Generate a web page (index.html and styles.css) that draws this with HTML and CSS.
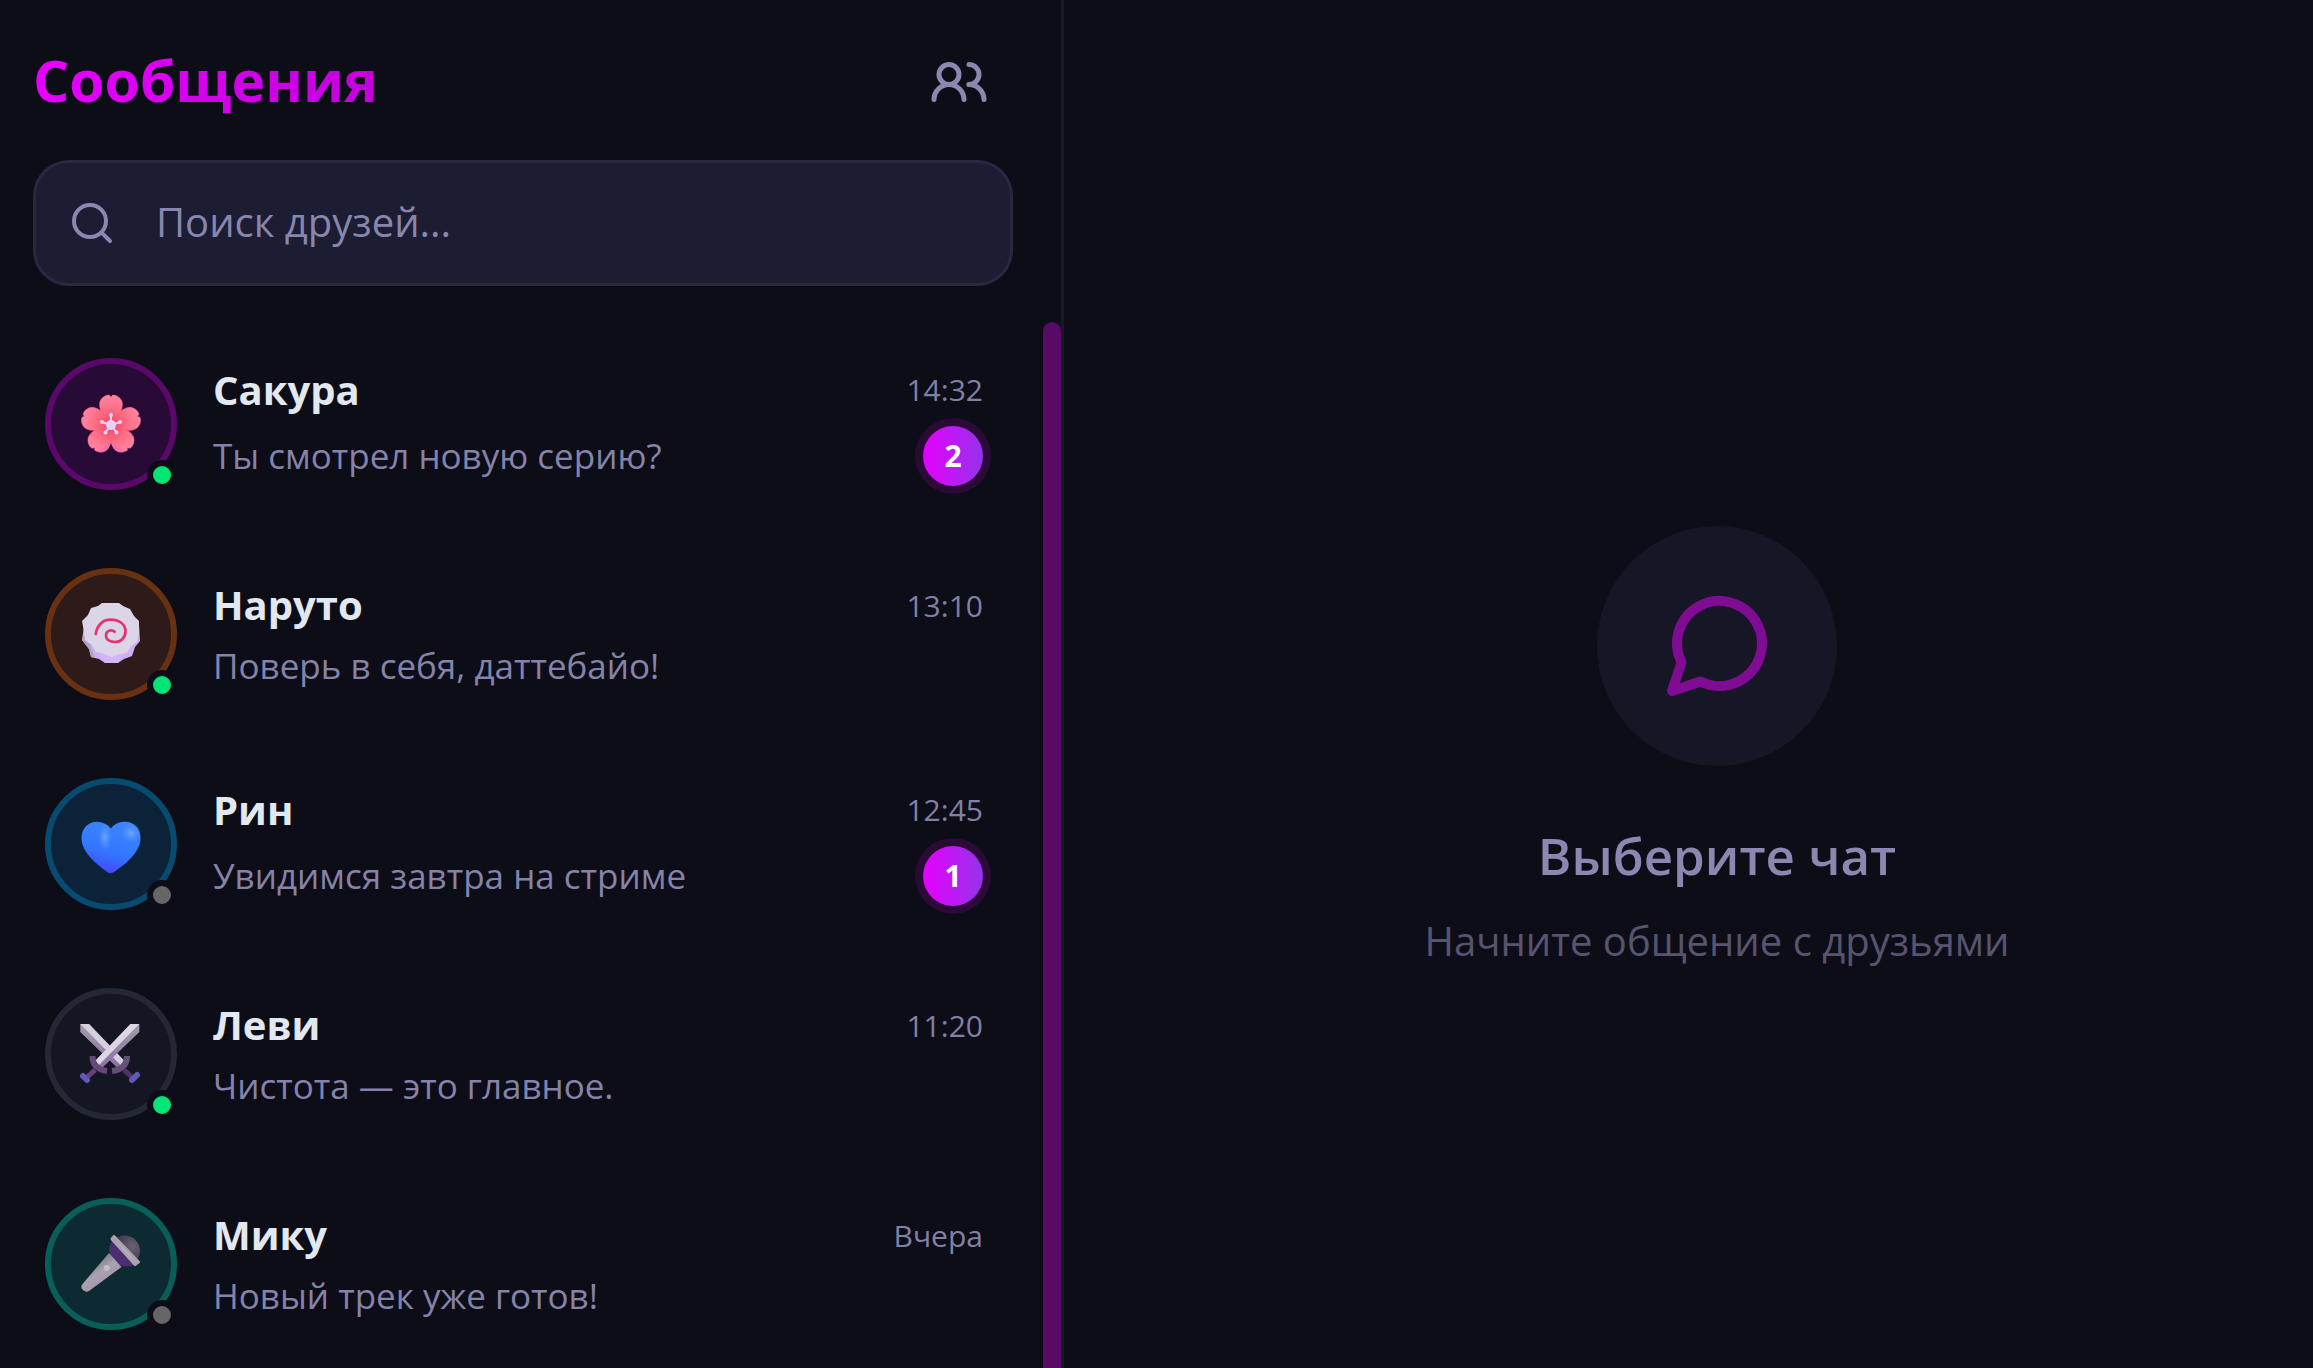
FILE: index.html
```html
<!DOCTYPE html>
<html lang="ru">
<head>
  <meta charset="UTF-8">
  <meta name="viewport" content="width=device-width, initial-scale=1.0">
  <title>Сообщения</title>
  <link rel="stylesheet" href="styles.css">
</head>
<body>
  <div class="app">
    <aside class="sidebar">
      <header class="header">
        <h1 class="title">Сообщения</h1>
        <button class="icon-btn" type="button" aria-label="Друзья">
          <svg viewBox="0 0 24 24"><circle cx="8" cy="9" r="4"/><path d="M2 19a6 6 0 0 1 12 0"/><path d="M16 5a4 4 0 0 1 0 8"/><path d="M16 13a6 6 0 0 1 6 6"/></svg>
        </button>
      </header>

      <label class="search">
        <svg viewBox="0 0 24 24"><circle cx="11" cy="11" r="8"/><path d="M21 21l-4.3-4.3"/></svg>
        <input type="text" placeholder="Поиск друзей..." aria-label="Поиск друзей">
      </label>

      <div class="list-wrap">
        <ul class="chat-list">
          <li>
            <a class="chat" href="#">
              <span class="avatar pink">
                <svg viewBox="0 0 60 60">
                  <defs>
                    <radialGradient id="petal" gradientUnits="userSpaceOnUse" cx="30" cy="30" r="30">
                      <stop offset="0" stop-color="#f5455f"/><stop offset=".55" stop-color="#ff6f88"/><stop offset="1" stop-color="#ff86a6"/>
                    </radialGradient>
                    <path id="p" d="M30 32C24 25 18 18 18.500 9.500C19 5 23 1.500 27 1L28.500 1L30 3L31.500 1L33 1C37 1.500 41 5 41.500 9.500C42 18 36 25 30 32Z"/>
                  </defs>
                  <g fill="url(#petal)" stroke="#f25f7c" stroke-width=".4">
                    <use href="#p" transform="rotate(144 30 31)"/>
                    <use href="#p" transform="rotate(216 30 31)"/>
                    <use href="#p" transform="rotate(72 30 31)"/>
                    <use href="#p" transform="rotate(288 30 31)"/>
                    <use href="#p"/>
                  </g>
                  <path d="M16 57c5 3 10 2 13-6l1-8 1 8c3 8 8 9 13 6-5-1-9-4-14-10-5 6-9 9-14 10z" fill="#f35fc0" opacity=".4"/>
                  <g stroke="#ead2ff" stroke-width="2" fill="#ead2ff">
                    <path d="M30 31V21M30 31l9.500-3M30 31l6 8M30 31l-6 8M30 31l-9.500-3"/>
                    <circle cx="30" cy="21" r="1"/><circle cx="39" cy="28" r="1"/><circle cx="35.500" cy="38.500" r="1"/><circle cx="24.500" cy="38.500" r="1"/><circle cx="21" cy="28" r="1"/>
                    <circle cx="30" cy="31" r="4"/>
                  </g>
                </svg>
                <i class="status online"></i>
              </span>
              <span class="info">
                <span class="row"><b class="name">Сакура</b><time class="time">14:32</time></span>
                <span class="row"><span class="preview">Ты смотрел новую серию?</span><span class="badge">2</span></span>
              </span>
            </a>
          </li>
          <li>
            <a class="chat" href="#">
              <span class="avatar orange">
                <svg viewBox="0 0 60 60">
                  <path d="M3 22L1 36L8 45L10 53L18 55L24 59H37L43 55L51 52L54 43L59 37L58 20Z" fill="#cfaef5"/>
                  <path d="M1 36L8 45L10 53L14 54L8 38L3 31Z" fill="#b3a3bd"/>
                  <path d="M18 50L24 59H37L43 50Z" fill="#d6b4fa"/>
                  <path d="M21 -1H38L42 2L49 5L53 12L58 17V29L56 38L50 42L46 49L38 50L31 53L23 50L15 48L11 41L4 36L3 28L1 17L7 11L10 4L17 2Z" fill="#dbd5e8"/>
                  <path d="M14.700 30C16 21 22 15.700 29.500 15.700C38 15.700 44.500 20 44.500 27.500C44.500 34 39.500 38 34 38C28.500 38 25 35.500 25 31.500C25 26.500 30.500 25 33.700 27.700" fill="none" stroke="#e5336f" stroke-width="2.700" stroke-linecap="round"/>
                </svg>
                <i class="status online"></i>
              </span>
              <span class="info">
                <span class="row"><b class="name">Наруто</b><time class="time">13:10</time></span>
                <span class="row"><span class="preview">Поверь в себя, даттебайо!</span></span>
              </span>
            </a>
          </li>
          <li>
            <a class="chat" href="#">
              <span class="avatar blue">
                <svg viewBox="0 0 60 60">
                  <defs>
                    <linearGradient id="heart" x1=".65" y1="0" x2=".4" y2="1">
                      <stop offset="0" stop-color="#3b86ff"/><stop offset=".6" stop-color="#3476ff"/><stop offset="1" stop-color="#4348ff"/>
                    </linearGradient>
                    <radialGradient id="shine"><stop offset="0" stop-color="#6ba5ff"/><stop offset="1" stop-color="#5593ff" stop-opacity="0"/></radialGradient>
                  </defs>
                  <path d="M30 14.500C26 10 21 7.700 16 7.700C7 7.700 .5 14.500 .5 24C.5 38 15 50 27 58.500Q30 60 33 58C45 50 59.500 38 59.500 24C59.500 14.500 53 7.700 44 7.700C38 7.700 33 10 30 14.500Z" fill="url(#heart)"/>
                  <ellipse cx="24" cy="23" rx="7" ry="14" fill="url(#shine)"/>
                  <ellipse cx="50" cy="19" rx="10" ry="10" fill="url(#shine)"/>
                </svg>
                <i class="status"></i>
              </span>
              <span class="info">
                <span class="row"><b class="name">Рин</b><time class="time">12:45</time></span>
                <span class="row"><span class="preview">Увидимся завтра на стриме</span><span class="badge">1</span></span>
              </span>
            </a>
          </li>
          <li>
            <a class="chat" href="#">
              <span class="avatar gray">
                <svg viewBox="0 0 60 60">
                  <defs>
                    <linearGradient id="edge" x1="0" y1="0" x2="0" y2="1"><stop offset="0" stop-color="#a49baa"/><stop offset="1" stop-color="#8c6fa8"/></linearGradient>
                  </defs>
                  <!-- left blade -->
                  <path d="M-.7 0H8L43.500 37L37 44.500L-.7 8Z" fill="url(#edge)"/>
                  <path d="M-.7 0H8L43.500 37L40 41.500Z" fill="#d5d0db"/>
                  <path d="M43 46L53 55" stroke="#55306f" stroke-width="5"/>
                  <path d="M46 32Q46 45 31 47" fill="none" stroke="#665075" stroke-width="6"/>
                  <path d="M51 56L56 51" stroke="#6159b5" stroke-width="6" stroke-linecap="round"/>
                  <!-- right blade -->
                  <path d="M58.300 0H49.500L14 37L20.500 44.500L58.300 8Z" fill="url(#edge)"/>
                  <path d="M58.300 0H49.500L14 37L17.500 41.500Z" fill="#dcd7e2"/>
                  <path d="M14 46L4 55" stroke="#6a407e" stroke-width="5"/>
                  <path d="M11.500 32Q11.500 45 26 47" fill="none" stroke="#65487a" stroke-width="6"/>
                  <path d="M2 52L6 56" stroke="#6159b5" stroke-width="6" stroke-linecap="round"/>
                </svg>
                <i class="status online"></i>
              </span>
              <span class="info">
                <span class="row"><b class="name">Леви</b><time class="time">11:20</time></span>
                <span class="row"><span class="preview">Чистота — это главное.</span></span>
              </span>
            </a>
          </li>
          <li>
            <a class="chat" href="#">
              <span class="avatar teal">
                <svg viewBox="0 0 60 60">
                  <defs>
                    <radialGradient id="mesh" cx=".75" cy=".35" r=".7"><stop offset="0" stop-color="#6a6371"/><stop offset="1" stop-color="#352943"/></radialGradient>
                    <linearGradient id="grip" x1=".3" y1=".3" x2=".6" y2=".7"><stop offset="0" stop-color="#85808a"/><stop offset=".5" stop-color="#aaa2ae"/><stop offset="1" stop-color="#a698ab"/></linearGradient>
                    <linearGradient id="band" x1="0" y1="0" x2="1" y2="1"><stop offset="0" stop-color="#8f8a94"/><stop offset=".5" stop-color="#c9c4cd"/><stop offset="1" stop-color="#a79dae"/></linearGradient>
                  </defs>
                  <circle cx="43.500" cy="17" r="15.500" fill="url(#mesh)"/>
                  <path d="M32 5L55 30C49 33.500 42 33 36 29C28 22 26 13 32 5Z" fill="#4c2d72"/>
                  <path d="M28 19L40.500 33L8 57Q5 59 2 56Q-1 53 1.500 50Z" fill="url(#grip)"/>
                  <path d="M33 2.500L57.500 28L54 30.500L31 5Z" fill="url(#band)" stroke="#aaa3b0" stroke-width="3" stroke-linejoin="round"/>
                  <circle cx="25.700" cy="34" r="3" fill="#c5bfc9"/>
                </svg>
                <i class="status"></i>
              </span>
              <span class="info">
                <span class="row"><b class="name">Мику</b><time class="time">Вчера</time></span>
                <span class="row"><span class="preview">Новый трек уже готов!</span></span>
              </span>
            </a>
          </li>
        </ul>
        <div class="scroll-track"><div class="scroll-thumb"></div></div>
      </div>
    </aside>

    <main class="empty">
      <div class="empty-icon">
        <svg viewBox="0 0 24 24"><path d="M16.300 19.100A8.500 8.500 0 1 0 4.900 15.300L3 21l5.700-1.900a8.500 8.500 0 0 0 7.600 0"/></svg>
      </div>
      <h2 class="empty-title">Выберите чат</h2>
      <p class="empty-text">Начните общение с друзьями</p>
    </main>
  </div>
</body>
</html>
```
FILE: styles.css
```css
* {
  box-sizing: border-box;
  margin: 0;
  padding: 0;
}
body {
  background: #0d0d18;
  color: #e2e8f0;
  font-family: "Open Sans", "Noto Sans", sans-serif;
}
.app {
  display: flex;
  height: 100vh;
  overflow: hidden;
}

/* sidebar */
.sidebar {
  display: flex;
  flex-direction: column;
  width: 46%;
  border-right: 3px solid #191925;
}
.header {
  display: flex;
  align-items: center;
  justify-content: space-between;
  padding: 36px 72px 32px 33px;
}
.title {
  padding-bottom: 4px;
  font-size: 57px;
  line-height: 88px;
  font-weight: 700;
  background: linear-gradient(90deg, #e600ff, #c400dc);
  -webkit-background-clip: text;
  background-clip: text;
  color: transparent;
}
.icon-btn {
  background: none;
  border: none;
  cursor: pointer;
}
svg {
  display: block;
}
.icon-btn svg,
.search svg,
.empty-icon svg {
  fill: none;
  stroke: #8a88b0;
  stroke-width: 2;
  stroke-linecap: round;
  stroke-linejoin: round;
}
.icon-btn svg {
  width: 60px;
  height: 60px;
}
.search {
  display: flex;
  align-items: center;
  gap: 40px;
  height: 126px;
  margin: 0 48px 36px 33px;
  padding: 0 32px;
  background: #1c1c33;
  border: 3px solid #29283f;
  border-radius: 36px;
}
.search svg {
  width: 48px;
  height: 48px;
  flex: none;
}
.search input {
  flex: 1;
  min-width: 0;
  padding-bottom: 4px;
  background: none;
  border: none;
  outline: none;
  color: #e2e8f0;
  font-family: inherit;
  font-size: 40px;
}
.search input::placeholder {
  color: #8886ad;
}

/* chat list */
.list-wrap {
  display: flex;
  flex: 1;
  min-height: 0;
}
.chat-list {
  flex: 1;
  min-width: 0;
  overflow: hidden;
  list-style: none;
}
.scroll-track {
  display: flex;
  width: 18px;
  background: #160b20;
}
.scroll-thumb {
  flex: 1;
  background: #580a66;
  border-radius: 9px 9px 0 0;
}
.chat {
  display: flex;
  align-items: center;
  gap: 36px;
  margin-bottom: 6px;
  padding: 36px 60px 36px 45px;
  color: inherit;
  text-decoration: none;
}
.avatar {
  position: relative;
  display: flex;
  align-items: center;
  justify-content: center;
  flex: none;
  width: 132px;
  height: 132px;
  border: 6px solid;
  border-radius: 50%;
}
.avatar svg {
  width: 60px;
  height: 60px;
  overflow: visible;
}
.pink { background: #280a36; border-color: #5b086b; }
.orange { background: #2d1a19; border-color: #683112; }
.blue { background: #0b2238; border-color: #084b70; }
.gray { background: #141623; border-color: #242735; }
.teal { background: #0d2a32; border-color: #075f58; }
.status {
  position: absolute;
  right: -6px;
  bottom: -6px;
  width: 30px;
  height: 30px;
  background: #666;
  border: 6px solid #0d0d18;
  border-radius: 50%;
}
.status.online {
  background: #00e676;
}
.info {
  display: flex;
  flex-direction: column;
  flex: 1;
  gap: 9px;
  min-width: 0;
}
.row {
  display: flex;
  align-items: center;
  justify-content: space-between;
}
.name {
  font-size: 40px;
  line-height: 54px;
  font-weight: 700;
}
.time {
  color: #8280a5;
  font-size: 30px;
}
.preview {
  color: #8583aa;
  font-size: 35px;
  line-height: 49px;
  white-space: nowrap;
}
.badge {
  width: 60px;
  height: 60px;
  border-radius: 50%;
  background: linear-gradient(90deg, #e600ff, #9333ea);
  box-shadow: 0 0 0 8px #2b0a37;
  color: #fff;
  font-size: 30px;
  line-height: 60px;
  font-weight: 700;
  text-align: center;
}

/* empty state */
.empty {
  display: flex;
  flex: 1;
  flex-direction: column;
  align-items: center;
  justify-content: center;
  padding: 126px 0 0 57px;
}
.empty-icon {
  display: flex;
  align-items: center;
  justify-content: center;
  width: 240px;
  height: 240px;
  margin-bottom: 52px;
  background: #171626;
  border-radius: 50%;
}
.empty-icon svg {
  width: 120px;
  height: 120px;
  stroke: #7f0c93;
}
.empty-title {
  margin-bottom: 20px;
  color: #8a88b0;
  font-size: 51px;
  line-height: 74px;
  font-weight: 600;
}
.empty-text {
  color: #56546e;
  font-size: 40px;
  line-height: 57px;
}
```
